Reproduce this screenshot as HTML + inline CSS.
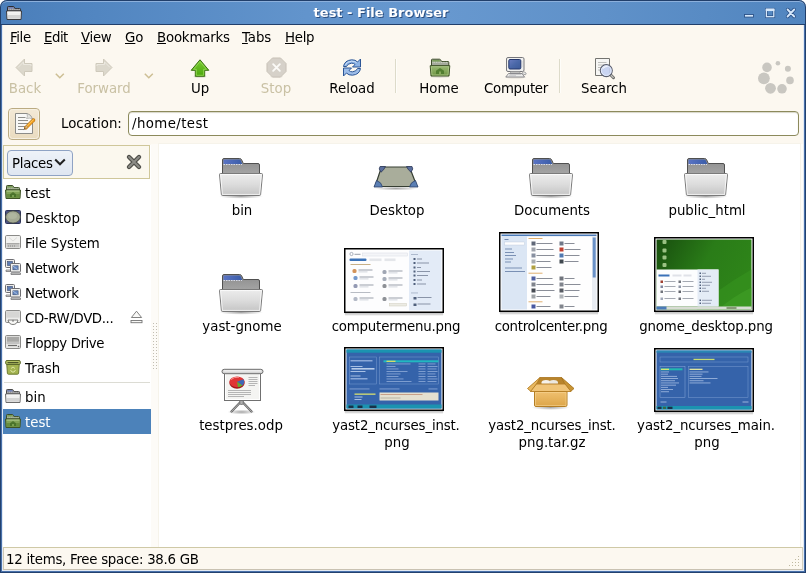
<!DOCTYPE html>
<html><head><meta charset="utf-8"><title>test - File Browser</title>
<style>
html,body{margin:0;padding:0;}
body{width:806px;height:573px;position:relative;overflow:hidden;background:#fff;font-family:"DejaVu Sans","Liberation Sans",sans-serif;font-size:13.33px;color:#000;}
.a{position:absolute;}
.t{will-change:transform;position:absolute;white-space:nowrap;line-height:16px;height:16px;}
.c{text-align:center;}
u{text-decoration:underline;text-underline-offset:1px;text-decoration-thickness:1px;}
#win{left:0;top:0;width:806px;height:573px;background:#23426f;border-radius:7px 7px 0 0;overflow:hidden;}
#tb{left:0;top:0;width:806px;height:25px;background:linear-gradient(to right,#4a7eba 0%,#5286c1 12%,#6294cc 38%,#6798cf 55%,#5f91c9 75%,#5185bf 100%);border-radius:7px 7px 0 0;box-shadow:inset 0 0 0 1px #213f6b, inset 0 2px 0 0 #8cb0dc;}
#content{left:3px;top:25px;width:800px;height:545px;background:#fcf8f0;}
#inb{left:1px;top:25px;width:804px;height:547px;background:#4870aa;}
#inb2{left:2px;top:25px;width:802px;height:546px;background:#e2eaf4;}
#title{left:0;width:762px;top:5px;text-align:center;color:#fff;font-weight:bold;font-size:13px;text-shadow:1px 1px 0 #2c4f80;}
.dis{color:#c9c1a4;}
svg{position:absolute;overflow:visible;}
</style></head><body>
<div id="win" class="a">
<div id="tb" class="a"></div>
<div id="title" class="t">test - File Browser</div>
<div id="inb" class="a"></div>
<div id="inb2" class="a"></div>
<div id="content" class="a"></div>
<svg style="left:6px;top:5px" width="16" height="16" viewBox="0 0 16 16">
<path d="M1.500 6 V2.300 Q1.500 1.500 2.300 1.500 H7.200 Q8 1.500 8.300 2.200 L8.800 3.500 H13.700 Q14.500 3.500 14.500 4.300 V6 Z" fill="#8e8e90" stroke="#2a2a30" stroke-width="1"/>
<path d="M2.300 3.600 V2.300 H7.300 L7.900 3.600 Z" fill="#6a7cc0"/><path d="M2.300 4.200 H13.800" stroke="#ffffff" stroke-opacity="0.700" stroke-width="0.700" stroke-dasharray="1 0.800"/>
<path d="M0.500 6 H15.500 L15 14.500 H1 Z" fill="#f0f0f0" stroke="#3a3a3e" stroke-width="1" stroke-linejoin="round"/>
<path d="M1.500 10 H14.500 L14.200 13.700 H1.800 Z" fill="#c8c8c8" opacity="0.700"/>
<path d="M1.600 7 H14.400" stroke="#ffffff" stroke-width="0.900" opacity="0.800"/>
</svg>
<svg style="left:740px;top:4px" width="60" height="18" viewBox="0 0 60 18">
<rect x="4.500" y="10.500" width="9" height="2.600" fill="#d6e8fb" stroke="#2c5288" stroke-width="0.900"/>
<rect x="26.400" y="5.300" width="7.400" height="7.400" fill="none" stroke="#2c5288" stroke-width="2.700"/><rect x="26.400" y="5.300" width="7.400" height="7.400" fill="none" stroke="#d6e8fb" stroke-width="1.300"/><rect x="25.750" y="4.650" width="8.700" height="2.400" fill="#d6e8fb"/>
<path d="M47.700 5.600 L54.100 12.400 M54.100 5.600 L47.700 12.400" stroke="#2c5288" stroke-width="3.600" stroke-linecap="round"/><path d="M47.700 5.600 L54.100 12.400 M54.100 5.600 L47.700 12.400" stroke="#d6e8fb" stroke-width="2.100" stroke-linecap="round"/>
</svg>
<div class="t" style="left:10px;top:30px;letter-spacing:-0.4px;"><u>F</u>ile</div>
<div class="t" style="left:44px;top:30px;letter-spacing:-0.5px;"><u>E</u>dit</div>
<div class="t" style="left:81px;top:30px;letter-spacing:-0.3px;"><u>V</u>iew</div>
<div class="t" style="left:125px;top:30px;"><u>G</u>o</div>
<div class="t" style="left:157px;top:30px;letter-spacing:-0.2px;"><u>B</u>ookmarks</div>
<div class="t" style="left:242px;top:30px;letter-spacing:-0.1px;"><u>T</u>abs</div>
<div class="t" style="left:285px;top:30px;letter-spacing:-0.3px;"><u>H</u>elp</div>
<div class="t c dis" style="left:-0.5px;top:81px;width:50px;">Back</div>
<div class="t c dis" style="left:64px;top:81px;width:80px;">Forward</div>
<div class="t c" style="left:170px;top:81px;width:60px;">Up</div>
<div class="t c dis" style="left:246px;top:81px;width:60px;">Stop</div>
<div class="t c" style="left:312px;top:81px;width:80px;">Reload</div>
<div class="t c" style="left:399px;top:81px;width:80px;">Home</div>
<div class="t c" style="left:466px;top:81px;width:100px;letter-spacing:-0.3px;">Computer</div>
<div class="t c" style="left:564px;top:81px;width:80px;">Search</div>
<div class="a" style="left:395px;top:59px;width:1px;height:34px;background:#dddbca;"></div>
<div class="a" style="left:396px;top:59px;width:1px;height:34px;background:#fefdf9;"></div>
<div class="a" style="left:559px;top:59px;width:1px;height:34px;background:#dddbca;"></div>
<div class="a" style="left:560px;top:59px;width:1px;height:34px;background:#fefdf9;"></div>
<svg style="left:14px;top:57px" width="22" height="22" viewBox="0 0 22 22"><path d="M2 10.500 L10.500 2 V6.500 H18 V14.500 H10.500 V19 Z" fill="#dcd8cc" stroke="#cec9bb" stroke-width="1" stroke-linejoin="round"/><path d="M4 10.500 L9.500 5 V7.500 H17 V9 " fill="none" stroke="#ebe8df" stroke-width="1"/></svg>
<svg style="left:94px;top:57px" width="22" height="22" viewBox="0 0 22 22"><path d="M18 10.500 L9.500 2 V6.500 H2 V14.500 H9.500 V19 Z" fill="#dcd8cc" stroke="#cec9bb" stroke-width="1" stroke-linejoin="round"/><path d="M16 10.500 L10.500 5 V7.500 H3 V9" fill="none" stroke="#ebe8df" stroke-width="1"/></svg>
<svg style="left:54.5px;top:73px" width="10" height="6" viewBox="0 0 10 6"><path d="M0.800 0.800 L4.800 4.800 L8.800 0.800" fill="none" stroke="#cdbf94" stroke-width="1.500"/></svg>
<svg style="left:143.5px;top:73px" width="10" height="6" viewBox="0 0 10 6"><path d="M0.800 0.800 L4.800 4.800 L8.800 0.800" fill="none" stroke="#cdbf94" stroke-width="1.500"/></svg>
<svg style="left:190px;top:58px" width="20" height="20" viewBox="0 0 20 20"><ellipse cx="10" cy="18.500" rx="6.500" ry="1.300" fill="#000" opacity="0.120"/><path d="M10 1.800 L18.800 12.300 H14.700 V18.300 H5.300 V12.300 H1.200 Z" fill="url(#gUp)" stroke="#3a6e12" stroke-width="1" stroke-linejoin="round"/><path d="M10 3.600 L16.500 11.300 H13.700 V17.300 H6.300 V11.300 H3.500 Z" fill="none" stroke="#a0e060" stroke-width="0.900" opacity="0.800"/></svg>
<svg style="left:265.600px;top:57.400px" width="21" height="21" viewBox="0 0 22 22"><ellipse cx="11" cy="20.800" rx="7" ry="1" fill="#000" opacity="0.080"/><path d="M6.800 1 H15.200 L21 6.800 V15.200 L15.200 21 H6.800 L1 15.200 V6.800 Z" fill="#d6d1c9" stroke="#c6c0b6" stroke-width="1"/><path d="M7.500 7.500 L14.500 14.500 M14.500 7.500 L7.500 14.500" stroke="#fbfaf7" stroke-width="2" stroke-linecap="round"/></svg>
<svg style="left:342px;top:58px" width="20" height="20" viewBox="0 0 20 20">
<path d="M1.500 8.500 Q2.500 2.500 9.500 1.800 Q13.500 1.600 15.500 4 L18.500 1 V9 H10.500 L13 6.500 Q11.500 5 9.500 5.200 Q5.500 5.600 4.500 8.500 Z" fill="#8cb2e4" stroke="#2c5696" stroke-width="1" stroke-linejoin="round"/>
<path d="M18.500 10.500 Q17.500 16.500 10.500 17.200 Q6.500 17.400 4.500 15 L1.500 18 V10 H9.500 L7 12.500 Q8.500 14 10.500 13.800 Q14.500 13.400 15.500 10.500 Z" fill="#9cbce8" stroke="#2c5696" stroke-width="1" stroke-linejoin="round"/>
<path d="M3 7.500 Q4.500 3.500 9.500 3.200 Q12.500 3.100 14.500 4.500" fill="none" stroke="#d4e4f8" stroke-width="0.900"/>
</svg>
<svg style="left:429px;top:58px" width="22" height="20" viewBox="0 0 22 20"><ellipse cx="11" cy="18.700" rx="10" ry="1.200" fill="#000" opacity="0.100"/>
<path d="M2.500 8 V2 Q2.500 1.200 3.300 1.200 H10.500 Q11.300 1.200 11.700 2 L12.500 3.500 H19 Q19.800 3.500 19.800 4.300 V8 Z" fill="#a4aa9c" stroke="#3e4e2a" stroke-width="1"/>
<path d="M3.300 3.600 V2.200 H10.600 L11.400 3.600 Z" fill="#6c9a44"/><path d="M3.500 4.300 H19" stroke="#dfe6d4" stroke-width="0.800" stroke-dasharray="1 0.700"/>
<path d="M1.200 7.700 H20.800 L20 18 H2 Z" fill="url(#gHome)" stroke="#3e5226" stroke-width="1" stroke-linejoin="round"/>
<path d="M2.300 8.700 H19.700 L19 17 H3 Z" fill="none" stroke="#b6d094" stroke-width="0.800" opacity="0.800"/>
<path d="M11 10 L15 12.800 V16 H7 V12.800 Z" fill="#4c7a2c" opacity="0.900"/><rect x="10" y="13.500" width="2" height="2.500" fill="#86aa5c"/>
</svg>
<svg style="left:504px;top:56px" width="24" height="23" viewBox="0 0 24 23"><ellipse cx="11.500" cy="21.300" rx="10.500" ry="1.300" fill="#000" opacity="0.100"/>
<rect x="2.500" y="1.500" width="17.500" height="14" rx="1.500" fill="#f0f0ee" stroke="#76767a" stroke-width="1"/>
<rect x="4.800" y="3.500" width="12" height="9.500" rx="1.200" fill="url(#gScr)" stroke="#26386c" stroke-width="1"/>
<path d="M17.800 6 H19 M17.800 8 H19 M17.800 10 H19" stroke="#c0c0c4" stroke-width="0.600"/>
<path d="M6.500 15.500 H16 V17 H6.500 Z" fill="#d4d4d2" stroke="#8a8a8c" stroke-width="0.600"/>
<path d="M4.500 17.500 H18 L20.500 21 H1.800 Z" fill="#f0f0ee" stroke="#808084" stroke-width="0.900" stroke-linejoin="round"/>
<path d="M5.500 18.600 H17.300 M4.800 19.800 H12" stroke="#b4b4b8" stroke-width="0.700"/>
<ellipse cx="20.300" cy="17.300" rx="2" ry="1.200" fill="#ececea" stroke="#8a8a8c" stroke-width="0.700" transform="rotate(25 20.300 17.300)"/>
</svg>
<svg style="left:593px;top:56px" width="24" height="24" viewBox="0 0 24 24">
<path d="M2.500 2.500 H16.500 V19.500 H2.500 Z" fill="#f6f6f4" stroke="#747470" stroke-width="1"/>
<path d="M5 6.500 H13.500 M5 9 H13.500 M5 11.500 H8 M5 14 H7.500" stroke="#b8b8b4" stroke-width="0.900"/>
<path d="M17.300 18.500 L20.500 21.700" stroke="#6a6a66" stroke-width="3" stroke-linecap="round"/><path d="M17.800 19 L20.300 21.500" stroke="#c4c4c0" stroke-width="1.100" stroke-linecap="round"/>
<circle cx="13.300" cy="14.600" r="6" fill="#c4d0f0" fill-opacity="0.920" stroke="#5a5e6c" stroke-width="1.100"/>
<circle cx="13.300" cy="14.600" r="4.900" fill="none" stroke="#e8eefc" stroke-width="0.900"/>
<path d="M10 12.500 Q11.500 10.300 14.500 10.500" stroke="#fff" stroke-width="1.200" fill="none" opacity="0.800"/>
</svg>
<svg style="left:0;top:0" width="806" height="100" fill="#c9c7c1"><circle cx="777.9" cy="63.2" r="2.3"/><circle cx="787.9" cy="68.8" r="3"/><circle cx="790" cy="80.4" r="3.8"/><circle cx="782" cy="88.8" r="4.8"/><circle cx="770.5" cy="88.3" r="5.4"/><circle cx="763.9" cy="78.3" r="5.9"/><circle cx="767" cy="67.4" r="4.8"/></svg>
<div class="a" style="left:8px;top:108px;width:30px;height:30px;background:linear-gradient(#f3e9d6,#eadcc0);border:1px solid #bbab82;border-radius:4px;"></div>
<svg style="left:8px;top:108px" width="32" height="32" viewBox="0 0 32 32">
<rect x="1.500" y="1.500" width="29" height="29" rx="3" fill="none" stroke="#f7f1e3" stroke-width="1"/>
<path d="M7.500 5.500 H19 Q23 6.500 24.500 11 V25.500 H7.500 Z" fill="#f8f8f6" stroke="#8c8c88" stroke-width="1" stroke-linejoin="round"/>
<path d="M19 5.500 Q20 9 18.500 10.500 Q22 9.500 24.500 11 Q23 6.500 19 5.500 Z" fill="#e4e4e0" stroke="#9c9c98" stroke-width="0.600"/>
<path d="M10 9.500 H17.500 M10 12.500 H20 M10 15.500 H20 M10 18.500 H18 M10 21.500 H16" stroke="#8e8e8a" stroke-width="1"/>
<path d="M25.500 12.100 L17.800 19.800" stroke="#b87010" stroke-width="3.500" stroke-linecap="round"/>
<path d="M25.500 12.100 L18 19.600" stroke="#f4a424" stroke-width="2.200" stroke-linecap="round"/>
<path d="M25 11.800 L18.300 18.500" stroke="#fcd070" stroke-width="0.800" stroke-linecap="round"/>
<path d="M18.600 17.600 L15.800 21.700 L19.900 19 Z" fill="#e8c89c" stroke="#8a6a3a" stroke-width="0.400"/><path d="M15.800 21.700 L17.400 20.700 L16.800 20.100 Z" fill="#222"/>
</svg>
<div class="t" style="left:61px;top:116px;">Location:</div>
<div class="a" style="left:128px;top:111px;width:669px;height:23px;background:#fff;border:1px solid #8c8a5c;border-radius:4px;box-shadow:inset 0 1px 1px #d8d6c8;"></div>
<div class="t" style="left:132px;top:116px;letter-spacing:0.4px;">/home/test</div>
<div class="a" style="left:3px;top:145px;width:148px;height:402px;background:#fff;"></div>
<div class="a" style="left:3px;top:145px;width:145px;height:32px;background:#fbf8ee;border:1px solid #cfc79a;"></div>
<div class="a" style="left:7px;top:150px;width:64px;height:24px;background:linear-gradient(#eef2f8,#dfe6f1);border:1px solid #8fa3c4;border-radius:4px;"></div>
<div class="t" style="left:11.5px;top:156px;letter-spacing:-0.3px;">Places</div>
<svg style="left:54px;top:158px" width="12" height="9" viewBox="0 0 12 9"><path d="M1.2 1.5 L6 6.3 L10.8 1.5" fill="none" stroke="#222" stroke-width="2"/></svg>
<svg style="left:126px;top:154px" width="16" height="16" viewBox="0 0 16 16"><path d="M3 3 L13 13 M13 3 L3 13" fill="none" stroke="#4e4e48" stroke-width="4.4" stroke-linecap="round"/><path d="M3 3 L13 13 M13 3 L3 13" fill="none" stroke="#8c8c86" stroke-width="2" stroke-linecap="round"/></svg>
<div class="a" style="left:3px;top:409px;width:148px;height:25px;background:#4c82ba;"></div>
<div class="a" style="left:4px;top:382px;width:146px;height:1px;background:#dcdcd4;"></div>
<div class="t" style="left:25px;top:186px;">test</div>
<div class="t" style="left:25px;top:211px;">Desktop</div>
<div class="t" style="left:25px;top:236px;letter-spacing:-0.14px;">File System</div>
<div class="t" style="left:25px;top:261px;letter-spacing:-0.3px;">Network</div>
<div class="t" style="left:25px;top:286px;letter-spacing:-0.3px;">Network</div>
<div class="t" style="left:25px;top:311px;letter-spacing:-0.38px;">CD-RW/DVD...</div>
<div class="t" style="left:25px;top:336px;letter-spacing:-0.42px;">Floppy Drive</div>
<div class="t" style="left:25px;top:361px;">Trash</div>
<div class="t" style="left:25px;top:390px;">bin</div>
<div class="t" style="left:25px;top:415px;color:#fff;">test</div>
<svg style="left:5px;top:184px" width="16" height="16" viewBox="0 0 16 16">
<path d="M1.500 6 V2.300 Q1.500 1.500 2.300 1.500 H7.200 Q8 1.500 8.300 2.200 L8.800 3.500 H13.700 Q14.500 3.500 14.500 4.300 V6 Z" fill="#9aa48e" stroke="#3c4e28" stroke-width="1"/>
<path d="M2.300 3.600 V2.300 H7.300 L7.900 3.600 Z" fill="#6e9c44"/><path d="M2.300 4.200 H13.800" stroke="#cfe4b0" stroke-opacity="0.700" stroke-width="0.700" stroke-dasharray="1 0.800"/>
<path d="M0.500 6 H15.500 L15 14.500 H1 Z" fill="#80a256" stroke="#3e5426" stroke-width="1" stroke-linejoin="round"/>
<path d="M1.500 10 H14.500 L14.200 13.700 H1.800 Z" fill="#5c8436" opacity="0.700"/>
<path d="M1.600 7 H14.400" stroke="#cfe4b0" stroke-width="0.900" opacity="0.800"/><path d="M8 8 L11 10.200 V13 H5 V10.200 Z" fill="#456f28" opacity="0.850"/><rect x="7.300" y="11" width="1.400" height="2" fill="#8eb264"/>
</svg>
<svg style="left:5px;top:209px" width="16" height="16" viewBox="0 0 16 16"><rect x="0.500" y="1.500" width="15" height="13" rx="1" fill="#4a5284" stroke="#2e3458" stroke-width="1"/><ellipse cx="8" cy="8" rx="7.400" ry="6.100" fill="#a4aa94" stroke="#4a5040" stroke-width="0.800"/><ellipse cx="7.500" cy="7" rx="4.500" ry="3" fill="#b4baa4" opacity="0.700"/></svg>
<svg style="left:5px;top:234px" width="16" height="16" viewBox="0 0 16 16"><rect x="0.500" y="1.500" width="15" height="13" rx="1.200" fill="#f2f2f0" stroke="#8a8a88" stroke-width="1"/><path d="M1.500 9.500 H14.500 V13.500 H1.500 Z" fill="#c4c4c2"/><path d="M1.500 9.500 H14.500" stroke="#9c9c9a" stroke-width="0.800"/><path d="M3 12 H10" stroke="#8c8c8a" stroke-width="1" stroke-dasharray="1 1"/><path d="M4 3.500 L8 7 L12 3.500" fill="none" stroke="#dcdcda" stroke-width="1"/></svg>
<svg style="left:5px;top:259px" width="16" height="16" viewBox="0 0 16 16">
<rect x="0.500" y="0.500" width="9" height="8" rx="1" fill="#ececea" stroke="#6e6e72" stroke-width="1"/><rect x="2.600" y="2.600" width="4.800" height="3.800" fill="#5c7cb4" stroke="#34466c" stroke-width="0.600"/><path d="M1 11 H9 V12.500 H1 Z" fill="#d8d8d6" stroke="#77777a" stroke-width="0.800"/>
<rect x="5.500" y="4.500" width="10" height="8.500" rx="1" fill="#f0f0ee" stroke="#6e6e72" stroke-width="1"/><rect x="7.900" y="6.800" width="5.200" height="4" fill="#6a8cc4" stroke="#34466c" stroke-width="0.600"/><path d="M8 7 L12.500 10.500" stroke="#a4bce0" stroke-width="1"/><path d="M6 14 H15.500 V15.500 H6 Z" fill="#dcdcda" stroke="#77777a" stroke-width="0.800"/></svg>
<svg style="left:5px;top:284px" width="16" height="16" viewBox="0 0 16 16">
<rect x="0.500" y="0.500" width="9" height="8" rx="1" fill="#ececea" stroke="#6e6e72" stroke-width="1"/><rect x="2.600" y="2.600" width="4.800" height="3.800" fill="#5c7cb4" stroke="#34466c" stroke-width="0.600"/><path d="M1 11 H9 V12.500 H1 Z" fill="#d8d8d6" stroke="#77777a" stroke-width="0.800"/>
<rect x="5.500" y="4.500" width="10" height="8.500" rx="1" fill="#f0f0ee" stroke="#6e6e72" stroke-width="1"/><rect x="7.900" y="6.800" width="5.200" height="4" fill="#6a8cc4" stroke="#34466c" stroke-width="0.600"/><path d="M8 7 L12.500 10.500" stroke="#a4bce0" stroke-width="1"/><path d="M6 14 H15.500 V15.500 H6 Z" fill="#dcdcda" stroke="#77777a" stroke-width="0.800"/></svg>
<svg style="left:5px;top:309px" width="16" height="16" viewBox="0 0 16 16"><rect x="0.500" y="1.500" width="15" height="12" rx="1.200" fill="#e4e4e2" stroke="#8a8a88" stroke-width="1"/><rect x="1.500" y="2.500" width="13" height="6" fill="#d6d6d4"/><path d="M1.500 9.500 H14.500 V12.500 H1.500 Z" fill="#f4f4f2"/><path d="M3 11 H13 Q12 15.500 8 15.500 Q4 15.500 3 11 Z" fill="#f8f8f6" stroke="#6e6e6c" stroke-width="0.900"/><circle cx="8" cy="11.800" r="1" fill="#8a8a88"/></svg>
<svg style="left:130px;top:310px" width="13" height="14" viewBox="0 0 13 14"><path d="M6.500 1.200 L11.600 7.500 H1.400 Z" fill="#f8f8f6" stroke="#747474" stroke-width="0.900" stroke-linejoin="round"/><rect x="1" y="10.500" width="11" height="2.200" fill="#f8f8f6" stroke="#747474" stroke-width="0.900"/></svg>
<svg style="left:5px;top:334px" width="16" height="16" viewBox="0 0 16 16"><rect x="0.500" y="1.500" width="15" height="13" rx="1.200" fill="#e8e8e6" stroke="#8a8a88" stroke-width="1"/><rect x="1.800" y="2.800" width="12.400" height="5" fill="#a8a8a6"/><path d="M1.500 9 H14.500" stroke="#8c8c8a" stroke-width="0.800"/><path d="M3 11.500 H12" stroke="#6c6c6a" stroke-width="1.200"/><rect x="12.800" y="11.800" width="1.400" height="1.400" fill="#6c6c6a"/></svg>
<svg style="left:5px;top:359px" width="16" height="16" viewBox="0 0 16 16"><path d="M1.800 5.500 H14.200 L13.600 14.300 Q13.500 15.200 12.600 15.200 H3.400 Q2.500 15.200 2.400 14.300 Z" fill="#a4b450" stroke="#6c7a30" stroke-width="1"/><rect x="0.700" y="1.500" width="14.600" height="4" rx="1.300" fill="#b4c264" stroke="#5c6a2c" stroke-width="1"/><rect x="2.500" y="3" width="11" height="1.300" fill="#4c5628"/><path d="M6 9.500 L8 8 L10 9.500 M10.500 11 L9 13 H7 L5.500 11" fill="none" stroke="#dce6a4" stroke-width="1"/></svg>
<svg style="left:5px;top:388px" width="16" height="16" viewBox="0 0 16 16">
<path d="M1.500 6 V2.300 Q1.500 1.500 2.300 1.500 H7.200 Q8 1.500 8.300 2.200 L8.800 3.500 H13.700 Q14.500 3.500 14.500 4.300 V6 Z" fill="#8e8e90" stroke="#4a4a4a" stroke-width="1"/>
<path d="M2.300 3.600 V2.300 H7.300 L7.900 3.600 Z" fill="#6a7cc0"/><path d="M2.300 4.200 H13.800" stroke="#ffffff" stroke-opacity="0.700" stroke-width="0.700" stroke-dasharray="1 0.800"/>
<path d="M0.500 6 H15.500 L15 14.500 H1 Z" fill="#f0f0f0" stroke="#6c6c6c" stroke-width="1" stroke-linejoin="round"/>
<path d="M1.500 10 H14.500 L14.200 13.700 H1.800 Z" fill="#c8c8c8" opacity="0.700"/>
<path d="M1.600 7 H14.400" stroke="#ffffff" stroke-width="0.900" opacity="0.800"/>
</svg>
<svg style="left:5px;top:413px" width="16" height="16" viewBox="0 0 16 16">
<path d="M1.500 6 V2.300 Q1.500 1.500 2.300 1.500 H7.200 Q8 1.500 8.300 2.200 L8.800 3.500 H13.700 Q14.500 3.500 14.500 4.300 V6 Z" fill="#9aa48e" stroke="#3c4e28" stroke-width="1"/>
<path d="M2.300 3.600 V2.300 H7.300 L7.900 3.600 Z" fill="#6e9c44"/><path d="M2.300 4.200 H13.800" stroke="#cfe4b0" stroke-opacity="0.700" stroke-width="0.700" stroke-dasharray="1 0.800"/>
<path d="M0.500 6 H15.500 L15 14.500 H1 Z" fill="#80a256" stroke="#3e5426" stroke-width="1" stroke-linejoin="round"/>
<path d="M1.500 10 H14.500 L14.200 13.700 H1.800 Z" fill="#5c8436" opacity="0.700"/>
<path d="M1.600 7 H14.400" stroke="#cfe4b0" stroke-width="0.900" opacity="0.800"/><path d="M8 8 L11 10.200 V13 H5 V10.200 Z" fill="#456f28" opacity="0.850"/><rect x="7.300" y="11" width="1.400" height="2" fill="#8eb264"/>
</svg>
<div class="a" style="left:151px;top:144px;width:8px;height:403px;background:#fdfbf7;"></div>
<div class="a" style="left:800px;top:144px;width:3px;height:403px;background:#fefdf9;"></div>
<div class="a" style="left:158px;top:143px;width:641px;height:403px;background:#fff;border:1px solid #f6f3ea;"></div>
<div class="t c" style="left:161.5px;top:203px;width:160px;">bin</div>
<div class="t c" style="left:316.5px;top:203px;width:160px;">Desktop</div>
<div class="t c" style="left:471.5px;top:203px;width:160px;">Documents</div>
<div class="t c" style="left:626.5px;top:203px;width:160px;">public_html</div>
<div class="t c" style="left:161.5px;top:319px;width:160px;">yast-gnome</div>
<div class="t c" style="left:315.5px;top:319px;width:160px;letter-spacing:-0.2px;">computermenu.png</div>
<div class="t c" style="left:470.5px;top:319px;width:160px;letter-spacing:-0.28px;">controlcenter.png</div>
<div class="t c" style="left:626px;top:319px;width:160px;letter-spacing:-0.12px;">gnome_desktop.png</div>
<div class="t c" style="left:161px;top:418px;width:160px;">testpres.odp</div>
<div class="t c" style="left:315.7px;top:418px;width:160px;letter-spacing:-0.16px;">yast2_ncurses_inst.</div>
<div class="t c" style="left:316.5px;top:435px;width:160px;">png</div>
<div class="t c" style="left:471.8px;top:418px;width:160px;letter-spacing:-0.16px;">yast2_ncurses_inst.</div>
<div class="t c" style="left:471.5px;top:435px;width:160px;">png.tar.gz</div>
<div class="t c" style="left:626px;top:418px;width:160px;letter-spacing:-0.08px;">yast2_ncurses_main.</div>
<div class="t c" style="left:626.5px;top:435px;width:160px;">png</div>
<svg width="0" height="0" style="left:0;top:0">
<defs>
<linearGradient id="gFront" x1="0" y1="0" x2="0" y2="1"><stop offset="0" stop-color="#ececec"/><stop offset="0.5" stop-color="#dcdcdc"/><stop offset="1" stop-color="#c4c4c4"/></linearGradient>
<linearGradient id="gBack" x1="0" y1="0" x2="0" y2="1"><stop offset="0" stop-color="#8c8c8c"/><stop offset="1" stop-color="#a4a4a4"/></linearGradient>
<linearGradient id="gTab" x1="0" y1="0" x2="1" y2="0"><stop offset="0" stop-color="#5a74c4"/><stop offset="1" stop-color="#3a5ca8"/></linearGradient>
<radialGradient id="gShadow" cx="0.5" cy="0.5" r="0.5"><stop offset="0" stop-color="#000" stop-opacity="0.35"/><stop offset="1" stop-color="#000" stop-opacity="0"/></radialGradient>
<linearGradient id="gBox" x1="0" y1="0" x2="0" y2="1"><stop offset="0" stop-color="#f0c070"/><stop offset="1" stop-color="#dca548"/></linearGradient>
<linearGradient id="gGreen" x1="0" y1="0" x2="1" y2="0.4"><stop offset="0" stop-color="#184e0e"/><stop offset="0.55" stop-color="#2a7c18"/><stop offset="1" stop-color="#2e8419"/></linearGradient>
<linearGradient id="gUp" x1="0" y1="0" x2="0" y2="1"><stop offset="0" stop-color="#7ccc34"/><stop offset="1" stop-color="#4aa60c"/></linearGradient>
<linearGradient id="gHome" x1="0" y1="0" x2="0" y2="1"><stop offset="0" stop-color="#9aba72"/><stop offset="1" stop-color="#6e9444"/></linearGradient>
<linearGradient id="gScr" x1="0" y1="0" x2="1" y2="1"><stop offset="0" stop-color="#6a7cc0"/><stop offset="0.5" stop-color="#4a68a8"/><stop offset="1" stop-color="#3c5a98"/></linearGradient>

</defs></svg>
<svg style="left:219px;top:158px" width="44" height="42" viewBox="0 0 44 42"><ellipse cx="22" cy="38.5" rx="22" ry="2.2" fill="url(#gShadow)"/>
<path d="M3.5 15.5 V2 Q3.5 0.5 5 0.5 H20.5 Q22 0.5 22.6 1.8 L24.3 5.5 H39 Q40.5 5.5 40.5 7 V16 Z" fill="url(#gBack)" stroke="#505050" stroke-width="1"/>
<path d="M4.5 6 V2.2 Q4.5 1.5 5.3 1.5 H20.3 Q21.3 1.5 21.8 2.5 L23.3 6 Z" fill="url(#gTab)"/>
<path d="M4.5 6.5 H23" stroke="#d8dcec" stroke-width="1" stroke-dasharray="1.5 1" fill="none"/>
<path d="M0.5 16.5 Q0.5 15.5 1.5 15.5 H42.5 Q43.5 15.5 43.5 16.5 L41.6 36.5 Q41.5 37.5 40.5 37.5 H3.5 Q2.5 37.5 2.4 36.5 Z" fill="url(#gFront)" stroke="#7a7a7a" stroke-width="1"/>
<path d="M1.6 16.6 H42.4 L40.6 36.4 H3.4 Z" fill="none" stroke="#fff" stroke-opacity="0.75" stroke-width="1"/></svg>
<svg style="left:529px;top:158px" width="44" height="42" viewBox="0 0 44 42"><ellipse cx="22" cy="38.5" rx="22" ry="2.2" fill="url(#gShadow)"/>
<path d="M3.5 15.5 V2 Q3.5 0.5 5 0.5 H20.5 Q22 0.5 22.6 1.8 L24.3 5.5 H39 Q40.5 5.5 40.5 7 V16 Z" fill="url(#gBack)" stroke="#505050" stroke-width="1"/>
<path d="M4.5 6 V2.2 Q4.5 1.5 5.3 1.5 H20.3 Q21.3 1.5 21.8 2.5 L23.3 6 Z" fill="url(#gTab)"/>
<path d="M4.5 6.5 H23" stroke="#d8dcec" stroke-width="1" stroke-dasharray="1.5 1" fill="none"/>
<path d="M0.5 16.5 Q0.5 15.5 1.5 15.5 H42.5 Q43.5 15.5 43.5 16.5 L41.6 36.5 Q41.5 37.5 40.5 37.5 H3.5 Q2.5 37.5 2.4 36.5 Z" fill="url(#gFront)" stroke="#7a7a7a" stroke-width="1"/>
<path d="M1.6 16.6 H42.4 L40.6 36.4 H3.4 Z" fill="none" stroke="#fff" stroke-opacity="0.75" stroke-width="1"/></svg>
<svg style="left:684px;top:158px" width="44" height="42" viewBox="0 0 44 42"><ellipse cx="22" cy="38.5" rx="22" ry="2.2" fill="url(#gShadow)"/>
<path d="M3.5 15.5 V2 Q3.5 0.5 5 0.5 H20.5 Q22 0.5 22.6 1.8 L24.3 5.5 H39 Q40.5 5.5 40.5 7 V16 Z" fill="url(#gBack)" stroke="#505050" stroke-width="1"/>
<path d="M4.5 6 V2.2 Q4.5 1.5 5.3 1.5 H20.3 Q21.3 1.5 21.8 2.5 L23.3 6 Z" fill="url(#gTab)"/>
<path d="M4.5 6.5 H23" stroke="#d8dcec" stroke-width="1" stroke-dasharray="1.5 1" fill="none"/>
<path d="M0.5 16.5 Q0.5 15.5 1.5 15.5 H42.5 Q43.5 15.5 43.5 16.5 L41.6 36.5 Q41.5 37.5 40.5 37.5 H3.5 Q2.5 37.5 2.4 36.5 Z" fill="url(#gFront)" stroke="#7a7a7a" stroke-width="1"/>
<path d="M1.6 16.6 H42.4 L40.6 36.4 H3.4 Z" fill="none" stroke="#fff" stroke-opacity="0.75" stroke-width="1"/></svg>
<svg style="left:219px;top:274px" width="44" height="42" viewBox="0 0 44 42"><ellipse cx="22" cy="38.5" rx="22" ry="2.2" fill="url(#gShadow)"/>
<path d="M3.5 15.5 V2 Q3.5 0.5 5 0.5 H20.5 Q22 0.5 22.6 1.8 L24.3 5.5 H39 Q40.5 5.5 40.5 7 V16 Z" fill="url(#gBack)" stroke="#505050" stroke-width="1"/>
<path d="M4.5 6 V2.2 Q4.5 1.5 5.3 1.5 H20.3 Q21.3 1.5 21.8 2.5 L23.3 6 Z" fill="url(#gTab)"/>
<path d="M4.5 6.5 H23" stroke="#d8dcec" stroke-width="1" stroke-dasharray="1.5 1" fill="none"/>
<path d="M0.5 16.5 Q0.5 15.5 1.5 15.5 H42.5 Q43.5 15.5 43.5 16.5 L41.6 36.5 Q41.5 37.5 40.5 37.5 H3.5 Q2.5 37.5 2.4 36.5 Z" fill="url(#gFront)" stroke="#7a7a7a" stroke-width="1"/>
<path d="M1.6 16.6 H42.4 L40.6 36.4 H3.4 Z" fill="none" stroke="#fff" stroke-opacity="0.75" stroke-width="1"/></svg>
<svg style="left:372px;top:164px" width="48" height="28" viewBox="0 0 48 28">
<ellipse cx="24" cy="24.5" rx="22" ry="2" fill="url(#gShadow)"/>
<path d="M9.5 3 H37.5 L45 22.5 H3 Z" fill="#a9ad9b" stroke="#363e32" stroke-width="1.200" stroke-linejoin="round"/>
<path d="M8 2.5 H13.5 Q12 6 9 8.2 L7.2 5 Z M40 2.5 H34.5 Q36 6 39 8.200 L40.800 5 Z" fill="#5a6e9c" stroke="#2c3858" stroke-width="0.8"/>
<path d="M2 23 L4.500 16.500 Q9.500 18 10.500 23 Z M46 23 L43.500 16.500 Q38.500 18 37.500 23 Z" fill="#5b7fb4" stroke="#2c4068" stroke-width="0.8"/>
</svg>
<svg style="left:344px;top:248px" width="100" height="69" viewBox="0 0 100 69"><rect x="1" y="64" width="98" height="3.5" fill="#000" opacity="0.10"/><rect x="0.5" y="65" width="99" height="1.5" fill="#000" opacity="0.12"/><rect x="0" y="0" width="100" height="65" fill="#000"/><rect x="1.5" y="1.5" width="97" height="62" fill="#fff"/><g transform="translate(2.5,2.5)"><rect x="0" y="0" width="95" height="60" fill="#fdfdfe"/><rect x="62.500" y="0" width="32.500" height="60" fill="#e3ebf7"/><g transform="translate(0,-1.500)"><circle cx="5" cy="5" r="1.600" fill="none" stroke="#8890a0" stroke-width="0.700"/><rect x="8" y="4.800" width="6" height="1" fill="#9aa0aa"/><rect x="16" y="4" width="45" height="3" fill="#f4f5f8" stroke="#d8dce4" stroke-width="0.500"/><rect x="3" y="9.500" width="17" height="2.600" rx="1" fill="#3a72b8"/><rect x="23" y="9.500" width="12" height="2.600" fill="#e4e6ea"/><rect x="38" y="9.500" width="11" height="2.600" fill="#e4e6ea"/><rect x="4" y="15" width="20" height="1" fill="#c8b088"/><rect x="4" y="43" width="20" height="1" fill="#b8bcc4"/><rect x="6" y="20" width="4" height="4" rx="1.500" fill="#c87830" opacity="0.800"/><rect x="12" y="20.5" width="14" height="1" fill="#9aa0aa"/><rect x="12" y="22.5" width="9" height="0.800" fill="#c8ccd4"/><rect x="36" y="21" width="4" height="4" rx="1.500" fill="#8890a0" opacity="0.800"/><rect x="42" y="21.5" width="14" height="1" fill="#9aa0aa"/><rect x="42" y="23.5" width="9" height="0.800" fill="#c8ccd4"/><rect x="7" y="27" width="4" height="4" rx="1.500" fill="#5080c0" opacity="0.800"/><rect x="13" y="27.5" width="14" height="1" fill="#9aa0aa"/><rect x="13" y="29.5" width="9" height="0.800" fill="#c8ccd4"/><rect x="36" y="28" width="4" height="4" rx="1.500" fill="#9098a8" opacity="0.800"/><rect x="42" y="28.5" width="14" height="1" fill="#9aa0aa"/><rect x="42" y="30.5" width="9" height="0.800" fill="#c8ccd4"/><rect x="7" y="35" width="4" height="4" rx="1.500" fill="#7880a0" opacity="0.800"/><rect x="13" y="35.5" width="14" height="1" fill="#9aa0aa"/><rect x="13" y="37.5" width="9" height="0.800" fill="#c8ccd4"/><rect x="36" y="35" width="4" height="4" rx="1.500" fill="#70747c" opacity="0.800"/><rect x="42" y="35.5" width="14" height="1" fill="#9aa0aa"/><rect x="42" y="37.5" width="9" height="0.800" fill="#c8ccd4"/><rect x="7" y="48" width="4" height="4" rx="1.500" fill="#a0a8b8" opacity="0.800"/><rect x="13" y="48.5" width="14" height="1" fill="#9aa0aa"/><rect x="13" y="50.5" width="9" height="0.800" fill="#c8ccd4"/><rect x="36" y="48" width="4" height="4" rx="1.500" fill="#70747c" opacity="0.800"/><rect x="42" y="48.5" width="14" height="1" fill="#9aa0aa"/><rect x="42" y="50.5" width="9" height="0.800" fill="#c8ccd4"/><rect x="43" y="54.500" width="17" height="2.500" fill="#ecebe4" stroke="#c8c4b0" stroke-width="0.400"/></g><rect x="64.500" y="3.500" width="7" height="0.900" fill="#a8b4c8"/><rect x="64.500" y="42" width="7" height="0.900" fill="#a8b4c8"/><rect x="67" y="7.5" width="2" height="2" fill="#50607c"/><rect x="70.500" y="8.0" width="5" height="1" fill="#8a94a8"/><rect x="67" y="11.5" width="2" height="2" fill="#50607c"/><rect x="70.500" y="12.0" width="12" height="1" fill="#8a94a8"/><rect x="67" y="16" width="2" height="2" fill="#50607c"/><rect x="70.500" y="16.5" width="4" height="1" fill="#8a94a8"/><rect x="67" y="20" width="2" height="2" fill="#50607c"/><rect x="70.500" y="20.5" width="13" height="1" fill="#8a94a8"/><rect x="67" y="24" width="2" height="2" fill="#50607c"/><rect x="70.500" y="24.5" width="11" height="1" fill="#8a94a8"/><rect x="67" y="28.5" width="2" height="2" fill="#50607c"/><rect x="70.500" y="29.0" width="5" height="1" fill="#8a94a8"/><rect x="67" y="32.5" width="2" height="2" fill="#50607c"/><rect x="70.500" y="33.0" width="9" height="1" fill="#8a94a8"/><rect x="67" y="46.500" width="3" height="2.500" fill="#50607c"/><rect x="71" y="46.500" width="14" height="1" fill="#8a94a8"/><rect x="67" y="53" width="3" height="2.500" fill="#50607c"/><rect x="71" y="53" width="13" height="1" fill="#8a94a8"/></g></svg>
<svg style="left:499px;top:232px" width="100" height="84" viewBox="0 0 100 84"><rect x="1" y="79" width="98" height="3.5" fill="#000" opacity="0.10"/><rect x="0.5" y="80" width="99" height="1.5" fill="#000" opacity="0.12"/><rect x="0" y="0" width="100" height="80" fill="#000"/><rect x="1.5" y="1.5" width="97" height="77" fill="#fff"/><g transform="translate(2.5,2.5)"><rect width="95" height="75" fill="#fefefe"/><rect width="95" height="1.6" fill="#4a7ab8"/><rect x="0" y="1.6" width="25.5" height="73.400" fill="#dbe6f4"/><rect x="90.500" y="1.600" width="4.500" height="73.400" fill="#e8ecf2"/><rect x="91.200" y="3" width="3" height="40" fill="#6a92c8"/><rect x="3" y="7.500" width="20" height="3" fill="#fff" stroke="#b8c4d8" stroke-width="0.4"/><rect x="3" y="4.500" width="4" height="1" fill="#7088b0"/><rect x="3.500" y="14" width="7" height="1" fill="#7a90b4"/><rect x="3.500" y="17.5" width="9" height="1" fill="#7a90b4"/><rect x="3.500" y="20.5" width="11" height="1" fill="#7a90b4"/><rect x="3.500" y="24" width="8" height="1" fill="#7a90b4"/><rect x="3.500" y="27" width="6" height="1" fill="#7a90b4"/><rect x="3.500" y="33" width="17" height="1" fill="#7a90b4"/><rect x="3.500" y="36.5" width="20" height="1" fill="#7a90b4"/><rect x="27" y="3.5" width="14" height="1" fill="#e0b070"/><rect x="27" y="38.2" width="14" height="1" fill="#e0b070"/><rect x="27" y="66.8" width="14" height="1" fill="#e0b070"/><rect x="30" y="7" width="4" height="4" fill="#606878"/><rect x="35" y="8.5" width="16" height="1" fill="#8a8e98"/><rect x="58" y="7" width="4" height="4" fill="#707888"/><rect x="63" y="8.5" width="10" height="1" fill="#8a8e98"/><rect x="30" y="13" width="4" height="4" fill="#a0a4ac"/><rect x="35" y="14.5" width="17" height="1" fill="#8a8e98"/><rect x="58" y="13" width="4" height="4" fill="#c04030"/><rect x="63" y="14.5" width="16" height="1" fill="#8a8e98"/><rect x="30" y="19" width="4" height="4" fill="#8890a0"/><rect x="35" y="20.5" width="18" height="1" fill="#8a8e98"/><rect x="58" y="19" width="4" height="4" fill="#5078b0"/><rect x="63" y="20.5" width="15" height="1" fill="#8a8e98"/><rect x="30" y="25" width="4" height="4" fill="#a8acb0"/><rect x="35" y="26.5" width="14" height="1" fill="#8a8e98"/><rect x="58" y="25" width="4" height="4" fill="#404850"/><rect x="63" y="26.5" width="14" height="1" fill="#8a8e98"/><rect x="30" y="31" width="4" height="4" fill="#b0a040"/><rect x="35" y="32.5" width="15" height="1" fill="#8a8e98"/><rect x="30" y="42" width="4" height="4" fill="#5060a0"/><rect x="35" y="43.5" width="16" height="1" fill="#8a8e98"/><rect x="58" y="42" width="4" height="4" fill="#70747c"/><rect x="63" y="43.5" width="10" height="1" fill="#8a8e98"/><rect x="30" y="48" width="4" height="4" fill="#80848c"/><rect x="35" y="49.5" width="17" height="1" fill="#8a8e98"/><rect x="58" y="48" width="4" height="4" fill="#80848c"/><rect x="63" y="49.5" width="16" height="1" fill="#8a8e98"/><rect x="30" y="54" width="4" height="4" fill="#484c54"/><rect x="35" y="55.5" width="18" height="1" fill="#8a8e98"/><rect x="58" y="54" width="4" height="4" fill="#585c64"/><rect x="63" y="55.5" width="15" height="1" fill="#8a8e98"/><rect x="30" y="60" width="4" height="4" fill="#a0a4a8"/><rect x="35" y="61.5" width="14" height="1" fill="#8a8e98"/><rect x="58" y="60" width="4" height="4" fill="#b0b4b8"/><rect x="63" y="61.5" width="14" height="1" fill="#8a8e98"/><rect x="30" y="70" width="4" height="4" fill="#4858a0"/><rect x="35" y="71.5" width="14" height="1" fill="#8a8e98"/><rect x="58" y="70" width="4" height="4" fill="#80848c"/><rect x="63" y="71.5" width="10" height="1" fill="#8a8e98"/></g></svg>
<svg style="left:654px;top:237px" width="100" height="79" viewBox="0 0 100 79"><rect x="1" y="74" width="98" height="3.5" fill="#000" opacity="0.10"/><rect x="0.5" y="75" width="99" height="1.5" fill="#000" opacity="0.12"/><rect x="0" y="0" width="100" height="75" fill="#000"/><rect x="1.5" y="1.5" width="97" height="72" fill="#fff"/><g transform="translate(2.5,2.5)"><rect width="95" height="70" fill="url(#gGreen)"/><path d="M95 30 Q60 50 40 70 H95 Z" fill="#3a9a22" opacity="0.45"/><path d="M95 48 Q75 58 62 70 H95 Z" fill="#48aa2c" opacity="0.4"/><rect x="6" y="0.5" width="4" height="4" rx="1" fill="#b0d498" opacity="0.85"/><rect x="6" y="9" width="4" height="4" rx="1" fill="#b0d498" opacity="0.85"/><rect x="6" y="16" width="4" height="4" rx="1" fill="#b0d498" opacity="0.85"/><rect x="6" y="23.5" width="4" height="4" rx="1" fill="#b0d498" opacity="0.85"/><rect x="0" y="30" width="62" height="37" fill="#fcfdfe"/><rect x="41" y="30" width="21" height="37" fill="#e4ecf6"/><rect x="2" y="35" width="11" height="2" fill="#3a72b8"/><rect x="16" y="35" width="9" height="2" fill="#dfe2e8"/><rect x="27" y="35" width="8" height="2" fill="#dfe2e8"/><rect x="4" y="41" width="2.500" height="2.500" fill="#a04030"/><rect x="8" y="41.5" width="11" height="0.9" fill="#9aa0aa"/><rect x="22" y="41" width="2.500" height="2.500" fill="#70747c"/><rect x="26" y="41.5" width="11" height="0.9" fill="#9aa0aa"/><rect x="4" y="46" width="2.500" height="2.500" fill="#8088a0"/><rect x="8" y="46.5" width="11" height="0.9" fill="#9aa0aa"/><rect x="22" y="46" width="2.500" height="2.500" fill="#9098a8"/><rect x="26" y="46.5" width="11" height="0.9" fill="#9aa0aa"/><rect x="4" y="51" width="2.500" height="2.500" fill="#70747c"/><rect x="8" y="51.5" width="11" height="0.9" fill="#9aa0aa"/><rect x="22" y="51" width="2.500" height="2.500" fill="#60646c"/><rect x="26" y="51.5" width="11" height="0.9" fill="#9aa0aa"/><rect x="4" y="58" width="2.500" height="2.500" fill="#a0a8b8"/><rect x="8" y="58.5" width="11" height="0.9" fill="#9aa0aa"/><rect x="22" y="58" width="2.500" height="2.500" fill="#70747c"/><rect x="26" y="58.5" width="11" height="0.9" fill="#9aa0aa"/><rect x="43" y="33" width="1.500" height="1.500" fill="#50607c"/><rect x="45.500" y="33.3" width="4" height="0.9" fill="#8a94a8"/><rect x="43" y="36" width="1.500" height="1.500" fill="#50607c"/><rect x="45.500" y="36.3" width="9" height="0.9" fill="#8a94a8"/><rect x="43" y="39" width="1.500" height="1.500" fill="#50607c"/><rect x="45.500" y="39.3" width="3" height="0.9" fill="#8a94a8"/><rect x="43" y="42" width="1.500" height="1.500" fill="#50607c"/><rect x="45.500" y="42.3" width="10" height="0.9" fill="#8a94a8"/><rect x="43" y="45" width="1.500" height="1.500" fill="#50607c"/><rect x="45.500" y="45.3" width="8" height="0.9" fill="#8a94a8"/><rect x="43" y="48" width="1.500" height="1.500" fill="#50607c"/><rect x="45.500" y="48.3" width="4" height="0.9" fill="#8a94a8"/><rect x="43" y="51" width="1.500" height="1.500" fill="#50607c"/><rect x="45.500" y="51.3" width="7" height="0.9" fill="#8a94a8"/><rect x="43" y="60" width="1.500" height="1.500" fill="#50607c"/><rect x="45.500" y="60.3" width="10" height="0.9" fill="#8a94a8"/><rect x="43" y="63" width="1.500" height="1.500" fill="#50607c"/><rect x="45.500" y="63.3" width="9" height="0.9" fill="#8a94a8"/><rect x="0" y="67" width="95" height="3" fill="#d8dcd4"/><rect x="0" y="67" width="10" height="3" fill="#4a7ab8"/><rect x="70" y="67.500" width="10" height="2" fill="#889878"/></g></svg>
<svg style="left:344px;top:347px" width="100" height="68" viewBox="0 0 100 68"><rect x="1" y="63" width="98" height="3.5" fill="#000" opacity="0.10"/><rect x="0.5" y="64" width="99" height="1.5" fill="#000" opacity="0.12"/><rect x="0" y="0" width="100" height="64" fill="#000"/><rect x="1.5" y="1.5" width="97" height="61" fill="#fff"/><g transform="translate(2.5,2.5)"><rect width="95" height="59" fill="#3563aa"/><rect width="95" height="3.200" fill="#1b93b0"/><rect y="55" width="95" height="4" fill="#1b93b0"/><rect x="3" y="7.500" width="27" height="27" fill="none" stroke="#7a9cd0" stroke-width="0.5"/><rect x="33" y="7.500" width="59" height="27" fill="none" stroke="#7a9cd0" stroke-width="0.5"/><rect x="37" y="10.800" width="55" height="2" fill="#22b8c0"/><rect x="40" y="11.200" width="9" height="1.200" fill="#e8e060"/><rect x="4" y="10.500" width="22" height="1.500" fill="#8aa8d8"/><rect x="4" y="16.500" width="12" height="1" fill="#a8c0e4"/><rect x="5" y="18.500" width="23" height="1.600" fill="#b8cce8"/><rect x="4" y="21.500" width="15" height="1" fill="#a8c0e4"/><rect x="4" y="26" width="10" height="1" fill="#a8c0e4"/><rect x="4" y="28.500" width="17" height="1.500" fill="#8aa8d8"/><rect x="40" y="14" width="24" height="0.9" fill="#86a4d4"/><rect x="72" y="14" width="7" height="0.900" fill="#86a4d4"/><rect x="81" y="14" width="8" height="0.900" fill="#86a4d4"/><rect x="40" y="16.5" width="9" height="0.9" fill="#86a4d4"/><rect x="72" y="16.5" width="7" height="0.900" fill="#86a4d4"/><rect x="81" y="16.5" width="10" height="0.900" fill="#86a4d4"/><rect x="40" y="19" width="12" height="0.9" fill="#86a4d4"/><rect x="72" y="19" width="7" height="0.900" fill="#86a4d4"/><rect x="81" y="19" width="9" height="0.900" fill="#86a4d4"/><rect x="40" y="21.5" width="21" height="0.9" fill="#86a4d4"/><rect x="72" y="21.5" width="7" height="0.900" fill="#86a4d4"/><rect x="81" y="21.5" width="10" height="0.900" fill="#86a4d4"/><rect x="40" y="24" width="14" height="0.9" fill="#86a4d4"/><rect x="72" y="24" width="7" height="0.900" fill="#86a4d4"/><rect x="81" y="24" width="8" height="0.900" fill="#86a4d4"/><rect x="40" y="26.5" width="12" height="0.9" fill="#86a4d4"/><rect x="72" y="26.5" width="7" height="0.900" fill="#86a4d4"/><rect x="81" y="26.5" width="9" height="0.900" fill="#86a4d4"/><rect x="40" y="29" width="17" height="0.9" fill="#86a4d4"/><rect x="72" y="29" width="7" height="0.900" fill="#86a4d4"/><rect x="81" y="29" width="10" height="0.900" fill="#86a4d4"/><rect x="40" y="31.5" width="25" height="0.9" fill="#86a4d4"/><rect x="72" y="31.5" width="7" height="0.900" fill="#86a4d4"/><rect x="81" y="31.5" width="9" height="0.900" fill="#86a4d4"/><rect x="33" y="43" width="59" height="8" fill="#e4e0d0"/><rect x="34" y="44.500" width="42" height="1" fill="#c8a088"/><rect x="34" y="48" width="20" height="1" fill="#b8b4a4"/><rect x="8" y="44" width="21" height="1.300" fill="#d8e070"/><rect x="8" y="47" width="8" height="1" fill="#a8c0e4"/><rect x="8" y="49.500" width="7" height="1" fill="#a8c0e4"/><rect x="3" y="39" width="20" height="0.900" fill="#86a4d4"/><rect x="33" y="39" width="20" height="0.900" fill="#86a4d4"/><rect x="82" y="39" width="9" height="0.900" fill="#86a4d4"/><rect x="2" y="56" width="5" height="2.500" fill="#183048"/><rect x="11" y="56" width="5" height="2.500" fill="#183048"/><rect x="23" y="56" width="7" height="2.500" fill="#183048"/></g></svg>
<svg style="left:654px;top:348px" width="100" height="68" viewBox="0 0 100 68"><rect x="1" y="63" width="98" height="3.5" fill="#000" opacity="0.10"/><rect x="0.5" y="64" width="99" height="1.5" fill="#000" opacity="0.12"/><rect x="0" y="0" width="100" height="64" fill="#000"/><rect x="1.5" y="1.5" width="97" height="61" fill="#fff"/><g transform="translate(2.5,2.5)"><rect width="95" height="59" fill="#3563aa"/><rect width="95" height="2.200" fill="#2a88b4"/><rect y="55.500" width="95" height="3.500" fill="#1b93b0"/><rect x="3.500" y="6.500" width="88" height="5" fill="none" stroke="#7a9cd0" stroke-width="0.500"/><rect x="37" y="8.300" width="21" height="1.300" fill="#c8dc70"/><rect x="3.500" y="16" width="25" height="31" fill="none" stroke="#8aa8d8" stroke-width="0.500"/><rect x="32" y="16" width="59.500" height="31" fill="none" stroke="#7a9cd0" stroke-width="0.500"/><rect x="4" y="17.800" width="22" height="2" fill="#22b8b0"/><rect x="4.500" y="18.200" width="8" height="1.200" fill="#e8e870"/><rect x="33" y="18.200" width="13" height="1.300" fill="#e0e4a0"/><rect x="4.500" y="21" width="8" height="0.900" fill="#9ab4dc"/><rect x="4.500" y="23.2" width="7" height="0.900" fill="#9ab4dc"/><rect x="4.500" y="25.4" width="16" height="0.900" fill="#9ab4dc"/><rect x="4.500" y="27.6" width="17" height="0.900" fill="#9ab4dc"/><rect x="4.500" y="29.8" width="14" height="0.900" fill="#9ab4dc"/><rect x="4.500" y="32" width="18" height="0.900" fill="#9ab4dc"/><rect x="4.500" y="34.2" width="15" height="0.900" fill="#9ab4dc"/><rect x="4.500" y="36.4" width="7" height="0.900" fill="#9ab4dc"/><rect x="4.500" y="38.6" width="12" height="0.900" fill="#9ab4dc"/><rect x="4.500" y="40.8" width="8" height="0.900" fill="#9ab4dc"/><rect x="33" y="21" width="19" height="0.900" fill="#9ab4dc"/><rect x="33" y="23.2" width="13" height="0.900" fill="#9ab4dc"/><rect x="33" y="25.4" width="12" height="0.900" fill="#9ab4dc"/><rect x="33" y="27.6" width="28" height="0.900" fill="#9ab4dc"/><rect x="33" y="29.8" width="14" height="0.900" fill="#9ab4dc"/><rect x="33" y="32" width="21" height="0.900" fill="#9ab4dc"/><rect x="33" y="34.2" width="0" height="0.900" fill="#9ab4dc"/><rect x="4" y="51" width="6" height="1" fill="#9ab4dc"/><rect x="86" y="51" width="6" height="1" fill="#9ab4dc"/><rect x="1" y="56.200" width="4" height="2.300" fill="#183048"/><rect x="6.500" y="56.200" width="3" height="2.300" fill="#386848"/><rect x="11" y="56.200" width="5" height="2.300" fill="#183048"/></g></svg>
<svg style="left:217px;top:366px" width="50" height="50" viewBox="0 0 50 50">
<ellipse cx="24.500" cy="46" rx="14" ry="2.500" fill="url(#gShadow)"/>
<path d="M24.500 35 L14.500 45.500 M24.500 35 L34.500 45.500" stroke="#6a6a6a" stroke-width="2.400" stroke-linecap="round" fill="none"/>
<path d="M24.500 35 L14.500 45.500 M24.500 35 L34.500 45.500" stroke="#b4b4b4" stroke-width="0.900" stroke-linecap="round" fill="none"/>
<rect x="22.800" y="33.500" width="3.400" height="5" rx="1.200" fill="#b0b0b0" stroke="#666" stroke-width="0.700"/>
<rect x="7.500" y="6.500" width="36" height="28" fill="#f4f4f2" stroke="#707070" stroke-width="1"/>
<rect x="8.500" y="7.500" width="34" height="26" fill="none" stroke="#fff" stroke-width="1"/>
<rect x="5" y="3.300" width="41" height="4.400" rx="2.200" fill="#d4d4d4" stroke="#6e6e6e" stroke-width="1"/>
<rect x="6.500" y="4.300" width="38" height="1.200" rx="0.600" fill="#f4f4f4"/>
<ellipse cx="20" cy="17" rx="7.600" ry="5.800" fill="#a01818"/>
<ellipse cx="20" cy="15.800" rx="7.600" ry="5.400" fill="#e03434"/>
<path d="M20 15.800 L26.500 13.200 Q28.400 16.500 25.500 19.600 Z" fill="#3c68b8"/>
<path d="M20 15.800 L25.500 19.600 Q23.500 21 21 21.200 Z" fill="#60b030"/>
<path d="M14 13.500 Q17 10.800 22 11.200" stroke="#f89090" stroke-width="1" fill="none"/>
<g stroke="#a4a4a4" stroke-width="0.800"><path d="M31.500 11.500 H40.500 M31.500 13.500 H40.500 M31.500 15.500 H40.500 M31.500 17.500 H40.500 M31.500 19.500 H38"/><path d="M11 24.500 H34 M11 26.500 H34 M11 28.500 H34 M11 30.500 H27"/></g>
</svg>
<svg style="left:525px;top:374px" width="52" height="38" viewBox="0 0 52 38">
<ellipse cx="25.500" cy="33.500" rx="19" ry="2.500" fill="url(#gShadow)"/>
<path d="M15 3.500 H36.500 L40 10.500 H11 Z" fill="#b8842c" stroke="#a8741c" stroke-width="0.800"/>
<path d="M15 3.500 L2.500 14.500 L6 17.500 L11.500 10 Z" fill="#e8b860" stroke="#b47e24" stroke-width="0.900" stroke-linejoin="round"/>
<path d="M36.500 3.500 L49 14.500 L45.500 17.500 L40 10 Z" fill="#c89434" stroke="#a8741c" stroke-width="0.900" stroke-linejoin="round"/>
<ellipse cx="21" cy="9" rx="4.600" ry="3" fill="#f6f2ea"/><ellipse cx="28.500" cy="9" rx="4.600" ry="3" fill="#ece8e0"/>
<path d="M9.500 17.500 H42 V31 Q42 32.500 40.500 32.500 H11 Q9.500 32.500 9.500 31 Z" fill="url(#gBox)" stroke="#b47e24" stroke-width="1"/>
<path d="M10.500 18.500 H41 V31.500 H10.500 Z" fill="none" stroke="#f8d898" stroke-width="0.800" opacity="0.700"/>
<path d="M11.500 10 H40 L46 17.500 H5.500 Z" fill="#f0c478" stroke="#b47e24" stroke-width="0.900" stroke-linejoin="round"/>
</svg>
<svg style="left:153px;top:323px" width="5" height="48" fill="#c2beb2"><rect x="0" y="0" width="1" height="1"/><rect x="3" y="0" width="1" height="1"/><rect x="0" y="3" width="1" height="1"/><rect x="3" y="3" width="1" height="1"/><rect x="0" y="6" width="1" height="1"/><rect x="3" y="6" width="1" height="1"/><rect x="0" y="9" width="1" height="1"/><rect x="3" y="9" width="1" height="1"/><rect x="0" y="12" width="1" height="1"/><rect x="3" y="12" width="1" height="1"/><rect x="0" y="15" width="1" height="1"/><rect x="3" y="15" width="1" height="1"/><rect x="0" y="18" width="1" height="1"/><rect x="3" y="18" width="1" height="1"/><rect x="0" y="21" width="1" height="1"/><rect x="3" y="21" width="1" height="1"/><rect x="0" y="24" width="1" height="1"/><rect x="3" y="24" width="1" height="1"/><rect x="0" y="27" width="1" height="1"/><rect x="3" y="27" width="1" height="1"/><rect x="0" y="30" width="1" height="1"/><rect x="3" y="30" width="1" height="1"/><rect x="0" y="33" width="1" height="1"/><rect x="3" y="33" width="1" height="1"/><rect x="0" y="36" width="1" height="1"/><rect x="3" y="36" width="1" height="1"/><rect x="0" y="39" width="1" height="1"/><rect x="3" y="39" width="1" height="1"/><rect x="0" y="42" width="1" height="1"/><rect x="3" y="42" width="1" height="1"/><rect x="0" y="45" width="1" height="1"/><rect x="3" y="45" width="1" height="1"/></svg>
<div class="a" style="left:3px;top:547px;width:798px;height:21px;background:#fcf8f0;border:1px solid #cfc9a6;border-bottom-color:#c9c2b2;border-left-color:#d0c8b4;border-right-color:#d4cfbe;"></div>
<div class="t" style="left:5.5px;top:552px;letter-spacing:-0.27px;">12 items, Free space: 38.6 GB</div>
<svg style="left:789px;top:556px" width="10" height="10" fill="#bfb9a0"><rect x="9" y="0" width="1" height="1"/><rect x="6" y="3" width="1" height="1"/><rect x="9" y="3" width="1" height="1"/><rect x="3" y="6" width="1" height="1"/><rect x="6" y="6" width="1" height="1"/><rect x="9" y="6" width="1" height="1"/><rect x="0" y="9" width="1" height="1"/><rect x="3" y="9" width="1" height="1"/><rect x="6" y="9" width="1" height="1"/><rect x="9" y="9" width="1" height="1"/></svg>
</div>
</body></html>
